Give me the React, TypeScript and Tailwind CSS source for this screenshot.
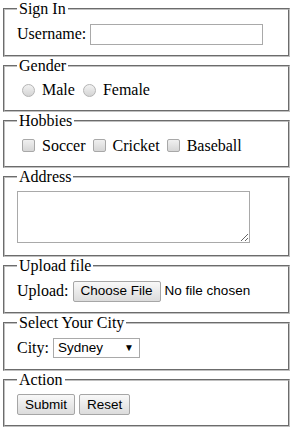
import { ReactNode } from "react";

function Group({ title, children }: { title: string; children: ReactNode }) {
  return (
    <fieldset className="mx-[3px] border-2 border-[#c0c0c0] [border-style:groove] px-3 pt-[5.6px] pb-[10px]">
      <legend className="px-[2px] leading-[18px]">{title}</legend>
      {children}
    </fieldset>
  );
}

function Radio() {
  return (
    <span className="ml-[5px] mr-[7px] inline-block h-[13px] w-[13px] shrink-0 rounded-full border border-[#b4b4b4] bg-gradient-to-b from-[#f2f2f2] to-[#d4d4d4]" />
  );
}

function Check() {
  return (
    <span className="ml-[5px] mr-[7px] inline-block h-[13px] w-[13px] shrink-0 rounded-[2px] border border-[#a8a8a8] bg-gradient-to-b from-[#f0f0f0] to-[#d6d6d6]" />
  );
}

function Btn({ label }: { label: string }) {
  return (
    <span className="inline-flex h-[21px] items-center rounded-[2px] border border-[#a6a6a6] bg-gradient-to-b from-[#f8f8f8] to-[#dcdcdc] px-[7px] font-['Liberation_Sans',Arial,sans-serif] text-[13.5px] text-black">
      {label}
    </span>
  );
}

export default function App() {
  return (
    <div className="w-[293px] min-h-[430px] bg-white font-['Liberation_Serif','Times_New_Roman',serif] text-[16px] leading-[18px] text-black">
      <Group title="Sign In">
        <div className="flex h-[21px] items-center">
          <span>Username:</span>
          <span className="ml-[4px] h-[21px] w-[173px] border border-[#a9a9a9] bg-white" />
        </div>
      </Group>

      <Group title="Gender">
        <div className="flex h-[20px] items-center">
          <Radio />
          <span className="mr-[3px]">Male</span>
          <Radio />
          <span>Female</span>
        </div>
      </Group>

      <Group title="Hobbies">
        <div className="flex h-[20px] items-center">
          <Check />
          <span className="mr-[2px]">Soccer</span>
          <Check />
          <span className="mr-[2px]">Cricket</span>
          <Check />
          <span>Baseball</span>
        </div>
      </Group>

      <Group title="Address">
        <div className="pb-[2px]">
          <textarea className="block h-[52px] w-[233px] border border-[#a9a9a9] bg-white" />
        </div>
      </Group>

      <Group title="Upload file">
        <div className="flex h-[21px] items-center">
          <span>Upload:</span>
          <span className="ml-[4px]">
            <Btn label="Choose File" />
          </span>
          <span className="ml-[4px] font-['Liberation_Sans',Arial,sans-serif] text-[13.5px]">
            No file chosen
          </span>
        </div>
      </Group>

      <Group title="Select Your City">
        <div className="flex h-[21px] items-center">
          <span>City:</span>
          <span className="ml-[4px] flex h-[20px] w-[87px] items-center justify-between border border-[#a9a9a9] bg-white pl-[4px] pr-[5px] font-['Liberation_Sans',Arial,sans-serif] text-[13.5px]">
            <span>Sydney</span>
            <span className="text-[10px]">▼</span>
          </span>
        </div>
      </Group>

      <Group title="Action">
        <div className="flex h-[21px] items-center gap-[4px]">
          <Btn label="Submit" />
          <Btn label="Reset" />
        </div>
      </Group>
    </div>
  );
}
